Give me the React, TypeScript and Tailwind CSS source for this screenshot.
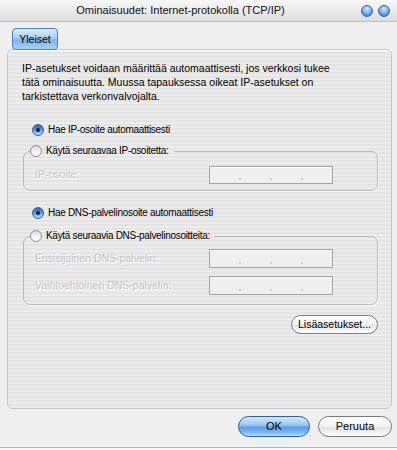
import React from "react";

function Radio({ checked }: { checked?: boolean }) {
  if (checked) {
    return (
      <span className="relative inline-flex w-[12px] h-[12px] shrink-0 rounded-full border border-[#3b5f92] bg-[image:linear-gradient(to_bottom,#2e63b5_0%,#5b95dc_45%,#8cc3f3_75%,#b5dcfb_100%)] items-center justify-center">
        <span className="w-[4px] h-[4px] rounded-full bg-[#0b1d3d]" />
      </span>
    );
  }
  return (
    <span className="inline-flex w-[12px] h-[12px] shrink-0 rounded-full border border-[#8e8e8e] bg-[image:linear-gradient(to_bottom,#d9d9d9_0%,#f6f6f6_60%,#ffffff_100%)]" />
  );
}

function RadioLabel({ checked, text }: { checked?: boolean; text: string }) {
  return (
    <div className="flex items-center h-[14px]">
      <Radio checked={checked} />
      <span className="ml-[4px] text-[10px] tracking-[-0.3px] leading-[14px] whitespace-nowrap">{text}</span>
    </div>
  );
}

function IpField({ h }: { h: string }) {
  return (
    <div className={`w-[124px] ${h} border border-[#a3a3a3] bg-[#efefef] shadow-[inset_0_1px_0_#ffffff] flex justify-evenly items-end pb-[3px]`}>
      <span className="w-[2px] h-[2px] bg-[#d2d2d2]" />
      <span className="w-[2px] h-[2px] bg-[#d2d2d2]" />
      <span className="w-[2px] h-[2px] bg-[#d2d2d2]" />
    </div>
  );
}

function DisabledLabel({ text }: { text: string }) {
  return (
    <span className="text-[10.5px] text-[#c4c4c4] [text-shadow:1px_1px_0_#ffffff] whitespace-nowrap">{text}</span>
  );
}

export default function App() {
  return (
    <div className="w-[397px] h-[450px] bg-[#f8f8f8] overflow-hidden font-['Liberation_Sans',Arial,sans-serif] text-black">
      <div className="h-[448px] flex flex-col bg-[#efefef] border-b border-[#b3b3b3]">
        {/* Title bar */}
        <div className="h-[22px] shrink-0 flex items-center border-b border-[#bdbdbd] bg-[image:linear-gradient(to_bottom,#f8f8f8_0%,#ebebeb_50%,#dcdcdc_100%)]">
          <div className="flex-1 text-center text-[11px] leading-none text-[#111]">Ominaisuudet: Internet-protokolla (TCP/IP)</div>
          <div className="flex gap-[5px] mr-[7px]">
            <span className="w-[12px] h-[12px] rounded-full border border-[#3a64a8] bg-[image:radial-gradient(circle_at_50%_30%,#d8ecff_0%,#7fb5f0_45%,#2f6dc9_100%)]" />
            <span className="w-[12px] h-[12px] rounded-full border border-[#3a64a8] bg-[image:radial-gradient(circle_at_50%_30%,#d8ecff_0%,#7fb5f0_45%,#2f6dc9_100%)]" />
          </div>
        </div>

        <div className="px-[7px] pr-[5px] flex flex-col">
          {/* Tab */}
          <div className="mt-[6px] ml-[5px] w-[46px] h-[22px] relative z-10 rounded-[4px] border border-[#4f80c2] bg-[image:linear-gradient(to_bottom,#dcecfd_0%,#a9cdf6_45%,#7fb3f0_55%,#a6d2fa_100%)] flex items-center justify-center text-[10.5px] leading-none">
            Yleiset
          </div>

          {/* Panel */}
          <div className="-mt-[1px] h-[360px] rounded-[6px] border border-[#c6c6c6] shadow-[inset_0_1px_0_#ffffff] bg-[image:repeating-linear-gradient(to_bottom,#ececec_0px,#ececec_2px,#e4e4e4_2px,#e4e4e4_4px)] flex flex-col pl-[14px] pr-[13px]">
            <p className="mt-[11px] text-[10.5px] leading-[14px] whitespace-nowrap">
              IP-asetukset voidaan määrittää automaattisesti, jos verkkosi tukee
              <br />
              tätä ominaisuutta. Muussa tapauksessa oikeat IP-asetukset on
              <br />
              tarkistettava verkonvalvojalta.
            </p>

            <div className="mt-[20px] ml-[10px]">
              <RadioLabel checked text="Hae IP-osoite automaattisesti" />
            </div>

            <fieldset className="mt-[7px] ml-[1px] border border-[#b9b9b9] rounded-[7px] p-0 m-0 shadow-[1px_1px_0_#f7f7f7]">
              <legend className="ml-[6px] pr-[5px] p-0">
                <RadioLabel text="Käytä seuraavaa IP-osoitetta:" />
              </legend>
              <div className="flex items-center justify-between pl-[11px] pr-[44px] mt-[8px] pb-[6px]">
                <DisabledLabel text="IP-osoite:" />
                <IpField h="h-[18px]" />
              </div>
            </fieldset>

            <div className="mt-[15px] ml-[10px]">
              <RadioLabel checked text="Hae DNS-palvelinosoite automaattisesti" />
            </div>

            <fieldset className="mt-[9px] ml-[1px] border border-[#b9b9b9] rounded-[7px] p-0 m-0 shadow-[1px_1px_0_#f7f7f7]">
              <legend className="ml-[6px] pr-[5px] p-0">
                <RadioLabel text="Käytä seuraavia DNS-palvelinosoitteita:" />
              </legend>
              <div className="flex flex-col gap-[8px] pl-[11px] pr-[44px] mt-[6px] pb-[9px]">
                <div className="flex items-center justify-between">
                  <DisabledLabel text="Ensisijainen DNS-palvelin:" />
                  <IpField h="h-[19px]" />
                </div>
                <div className="flex items-center justify-between">
                  <DisabledLabel text="Vaihtoehtoinen DNS-palvelin:" />
                  <IpField h="h-[19px]" />
                </div>
              </div>
            </fieldset>

            <div className="mt-[10px] flex justify-end">
              <button className="w-[87px] h-[19px] rounded-full border border-[#7d7d7d] bg-[image:linear-gradient(to_bottom,#ffffff_0%,#f1f1f1_50%,#e2e2e2_55%,#fdfdfd_100%)] text-[10.5px] leading-none">
                Lisäasetukset...
              </button>
            </div>
          </div>

          {/* Bottom buttons */}
          <div className="mt-[7px] flex justify-end gap-[8px]">
            <button className="w-[72px] h-[21px] rounded-full border border-[#2d5e9f] bg-[image:linear-gradient(to_bottom,#d3e8fc_0%,#9dcaf5_40%,#5d9fe8_55%,#7ab5f0_80%,#b8defb_100%)] text-[11px] leading-none">
              OK
            </button>
            <button className="w-[74px] h-[21px] rounded-full border border-[#7a7a7a] bg-[image:linear-gradient(to_bottom,#ffffff_0%,#f3f3f3_50%,#e3e3e3_55%,#fdfdfd_100%)] text-[11px] leading-none">
              Peruuta
            </button>
          </div>
        </div>
      </div>
    </div>
  );
}
